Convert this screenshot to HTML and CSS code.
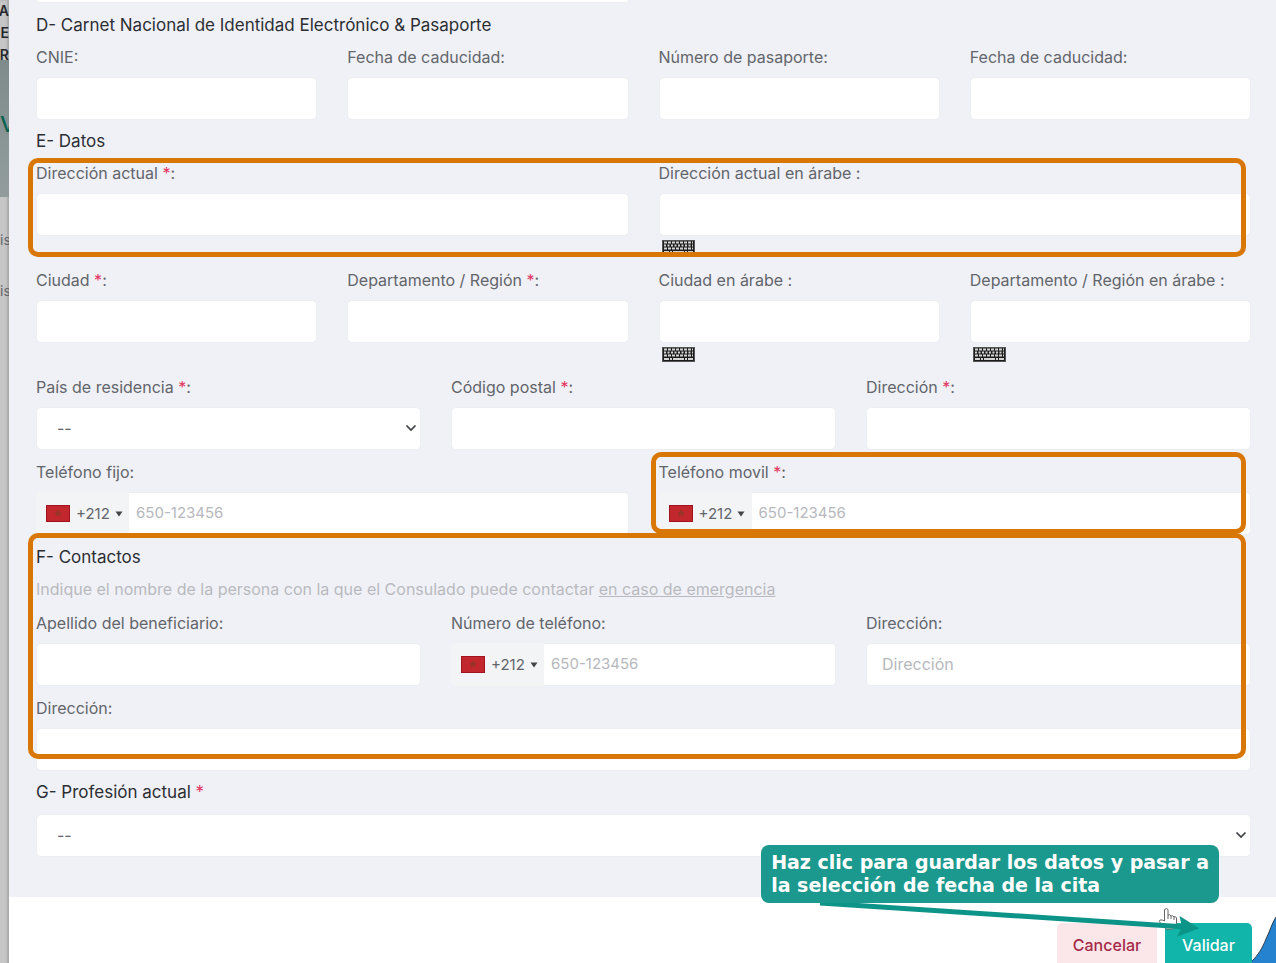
FILE: index.html
```html
<!DOCTYPE html>
<html lang="es">
<head>
<meta charset="utf-8">
<meta name="viewport" content="width=device-width, initial-scale=1">
<title>Solicitud de cita</title>
<link rel="stylesheet" href="styles.css">
</head>
<body>
<svg class="defs" aria-hidden="true">
  <symbol id="keyboard" viewBox="0 0 33 15">
    <rect x=".5" y=".5" width="32" height="14" fill="#1c1c1c" stroke="#555"/>
    <g stroke="#d4d4d4" stroke-width="2">
      <path d="M2 2.500h29" stroke-dasharray="3 1"/>
      <path d="M2 5.500h29" stroke-dasharray="2 1.500"/>
      <path d="M2 8.500h29" stroke-dasharray="3 1"/>
      <path d="M2 12h5m1 0h2m1 0h11m1 0h2m1 0h5"/>
    </g>
  </symbol>
  <symbol id="flag" viewBox="0 0 24 17">
    <rect x=".5" y=".5" width="23" height="16" fill="#c1272d" stroke="#a3121f"/>
    <path d="M12 5l2 6-5-3.700h6L10 11z" fill="none" stroke="#8c3a26" stroke-width=".8"/>
  </symbol>
  <symbol id="chevron" viewBox="0 0 12 8">
    <path d="M1.500 1.500L6 6l4.500-4.500" fill="none" stroke="#3c3f44" stroke-width="1.700"/>
  </symbol>
  <symbol id="caret" viewBox="0 0 8 6"><path d="M.5.500h7L4 5.500z" fill="#444"/></symbol>
</svg>
<div class="page">
  <div class="backdrop" aria-hidden="true">
    <div class="brand"><span>LA</span><span>E</span><span>R</span></div>
    <div class="hero">V</div>
    <div class="links"><span>is</span><span>is</span></div>
  </div>
  <main class="modal">
    <form class="form">
      <div class="previous"><input type="text" aria-label="Observaciones"></div>

      <h2 class="heading">D- Carnet Nacional de Identidad Electrónico &amp; Pasaporte</h2>
      <div class="row four">
        <div class="field"><label for="cnie">CNIE:</label><input id="cnie" type="text"></div>
        <div class="field"><label for="cnie-exp">Fecha de caducidad:</label><input id="cnie-exp" type="text"></div>
        <div class="field"><label for="pass">Número de pasaporte:</label><input id="pass" type="text"></div>
        <div class="field"><label for="pass-exp">Fecha de caducidad:</label><input id="pass-exp" type="text"></div>
      </div>

      <h2 class="heading">E- Datos</h2>
      <div class="row two mark mark-address">
        <div class="field"><label for="addr">Dirección actual <b>*</b>:</label><input id="addr" type="text"></div>
        <div class="field"><label for="addr-ar">Dirección actual en árabe :</label><input id="addr-ar" type="text">
          <button class="keys" type="button" aria-label="Teclado árabe"><svg><use href="#keyboard"/></svg></button></div>
      </div>
      <div class="row four">
        <div class="field"><label for="city">Ciudad <b>*</b>:</label><input id="city" type="text"></div>
        <div class="field"><label for="region">Departamento / Región <b>*</b>:</label><input id="region" type="text"></div>
        <div class="field"><label for="city-ar">Ciudad en árabe :</label><input id="city-ar" type="text">
          <button class="keys" type="button" aria-label="Teclado árabe"><svg><use href="#keyboard"/></svg></button></div>
        <div class="field"><label for="region-ar">Departamento / Región en árabe :</label><input id="region-ar" type="text">
          <button class="keys" type="button" aria-label="Teclado árabe"><svg><use href="#keyboard"/></svg></button></div>
      </div>
      <div class="row three">
        <div class="field"><label for="country">País de residencia <b>*</b>:</label>
          <div class="select"><select id="country"><option>--</option></select><svg><use href="#chevron"/></svg></div></div>
        <div class="field"><label for="zip">Código postal <b>*</b>:</label><input id="zip" type="text"></div>
        <div class="field"><label for="street">Dirección <b>*</b>:</label><input id="street" type="text"></div>
      </div>
      <div class="row two">
        <div class="field"><label for="tel">Teléfono fijo:</label>
          <div class="phone"><button type="button"><svg class="flag"><use href="#flag"/></svg>+212<svg class="caret"><use href="#caret"/></svg></button><input id="tel" type="tel" placeholder="650-123456"></div></div>
        <div class="field mark mark-mobile"><label for="mobile">Teléfono movil <b>*</b>:</label>
          <div class="phone"><button type="button"><svg class="flag"><use href="#flag"/></svg>+212<svg class="caret"><use href="#caret"/></svg></button><input id="mobile" type="tel" placeholder="650-123456"></div></div>
      </div>

      <section class="mark mark-contacts">
        <h2 class="heading">F- Contactos</h2>
        <p class="note">Indique el nombre de la persona con la que el Consulado puede contactar <u>en caso de emergencia</u></p>
        <div class="row three">
          <div class="field"><label for="c-name">Apellido del beneficiario:</label><input id="c-name" type="text"></div>
          <div class="field"><label for="c-tel">Número de teléfono:</label>
            <div class="phone"><button type="button"><svg class="flag"><use href="#flag"/></svg>+212<svg class="caret"><use href="#caret"/></svg></button><input id="c-tel" type="tel" placeholder="650-123456"></div></div>
          <div class="field"><label for="c-addr">Dirección:</label><input id="c-addr" type="text" placeholder="Dirección"></div>
        </div>
        <div class="row">
          <div class="field"><label for="c-addr2">Dirección:</label><input id="c-addr2" type="text"></div>
        </div>
      </section>

      <div class="field job">
        <label class="heading" for="job">G- Profesión actual <b>*</b></label>
        <div class="select"><select id="job"><option>--</option></select><svg><use href="#chevron"/></svg></div>
      </div>
    </form>
    <footer class="actions">
      <button class="cancel" type="button">Cancelar</button>
      <button class="submit" type="button">Validar</button>
      <svg class="corner" viewBox="0 0 24 46" aria-hidden="true"><path d="M24 0C20 6 18 14 14 22 10 32 6 38 0 44v2h24z" fill="#2482cf"/><path d="M24 0C20 6 18 14 14 22 10 32 6 38 0 44" fill="none" stroke="#2d3b4e"/></svg>
      <svg class="hand" viewBox="0 0 22 24" aria-hidden="true"><path d="M7.500 14V2.500Q9.500.5 11 2.500V8q2-1 3 1 2-1 3 1 2-1 2.500 1v5q0 4-3 6H9q-2-4-5-5.500-3-2-1-3.500 2-.5 4.500 1zM11 8v4M14 9v3M17 10v3" fill="#fff" stroke="#666"/></svg>
      <svg class="arrow" viewBox="0 0 380 40" aria-hidden="true"><path d="M0 3l366 24" stroke="#0d9488" stroke-width="5"/><path d="M361 18l16 10-18 7 4-8z" fill="#0d9488" stroke="#0d9488" stroke-width="2"/></svg>
      <div class="tip" role="tooltip">Haz clic para guardar los datos y pasar a<br>la selección de fecha de la cita</div>
    </footer>
  </main>
</div>
</body>
</html>
```
FILE: styles.css
```css
* { box-sizing: border-box; }
body { margin: 0; overflow: hidden; font: 400 16px/24px Inter, sans-serif; color: #62656b; }
button, input, select { font: inherit; color: inherit; }
button { border: 0; padding: 0; }
.defs { position: absolute; width: 0; height: 0; }
.page { display: grid; grid-template-columns: 9px minmax(0, 1fr); height: 100vh; overflow: hidden; }

.backdrop { overflow: hidden; background: #c6c6c6; box-shadow: inset -2px 0 2px #aaa; }
.backdrop div { display: flex; flex-direction: column; align-items: flex-end; }
.brand { height: 60px; font-weight: 600; font-size: 14px; line-height: 22px; color: #26282b; }
.backdrop .hero { height: 137px; padding-top: 52px; align-items: flex-start; background: linear-gradient(#7f8b8b, #929c9c); color: #08624f; font-size: 22px; font-weight: 500; }
.backdrop .links { gap: 27px; padding-top: 31px; align-items: flex-start; font-size: 14px; }

.modal { background: #fff; }
.form { padding: 0 25px 40px 27px; background: #f0f1f6; }
.previous { height: 14px; overflow: hidden; display: flex; align-items: flex-start; }
.previous input { height: 3px; border-top: 0; border-radius: 0 0 4px 4px; width: calc(50% - 15px); }
.heading { display: block; margin: 0 0 8px; font-size: 17px; font-weight: 400; line-height: 23px; color: #2b2e33; }
.row { display: grid; gap: 30px; margin-bottom: 10px; }
.two { grid-template-columns: repeat(2, minmax(0, 1fr)); }
.three { grid-template-columns: repeat(3, minmax(0, 1fr)); }
.four { grid-template-columns: repeat(4, minmax(0, 1fr)); }
.field { min-width: 0; }
.field label:not(.heading) { display: block; margin-bottom: 8px; white-space: nowrap; }
b { font-weight: 400; color: #e0335f; }
input, select { display: block; width: 100%; height: 43px; padding: 0 15px 2px; border: 1px solid #eceef2; border-radius: 5px; background: #fff; outline: 0; }
input::placeholder { color: #b6b8bd; opacity: 1; }
.keys { display: block; width: 33px; height: 15px; margin: 4px 0 3px 3px; background: none; }
.keys svg { display: block; width: 33px; height: 15px; }
.select { position: relative; }
.select select { appearance: none; padding-left: 20px; }
.select svg { position: absolute; right: 4px; top: 17px; width: 12px; height: 8px; pointer-events: none; }
.phone { display: flex; font-size: 15px; }
.phone button { display: flex; align-items: center; flex: 0 0 93px; padding-left: 10px; background: #f3f4f5; border-radius: 5px 0 0 5px; }
.phone input { padding-left: 7px; border-left: 0; border-radius: 0 5px 5px 0; min-width: 0; }
.flag { width: 24px; height: 17px; margin-right: 6px; }
.caret { width: 8px; height: 6px; margin-left: 5px; }
.note { margin: 0 0 10px; color: #b8babf; }
.job .heading { margin-bottom: 10px; }

.mark { position: relative; }
.mark::after { content: ""; position: absolute; z-index: 1; border: 5px solid #d97706; border-radius: 10px; pointer-events: none; }
.mark-address::after { inset: -3px 5px 1px -8px; }
.mark-mobile::after { inset: -8px 5px 1px -8px; }
.mark-contacts { margin-top: 11px; }
.mark-contacts::after { inset: -13px 5px 12px -8px; }

.actions { position: relative; display: flex; justify-content: flex-end; gap: 8px; padding: 26px 24px 24px; font-weight: 500; }
.actions button { height: 44px; border-radius: 5px; }
.cancel { width: 100px; background: #fbe6ea; color: #a52a48; }
.submit { width: 87px; background: #12b5aa; color: #fff; }
.corner { position: absolute; right: 0; top: 20px; width: 24px; height: 46px; }
.hand { position: absolute; right: 97px; top: 10px; width: 22px; height: 24px; }
.arrow { position: absolute; right: 76px; top: 3px; width: 380px; height: 40px; }
.tip { position: absolute; right: 57px; top: -52px; padding: 6px 10px; border-radius: 8px; background: #1c998e; color: #fff; font: bold 19px/23px "DejaVu Sans", sans-serif; white-space: nowrap; }
```
